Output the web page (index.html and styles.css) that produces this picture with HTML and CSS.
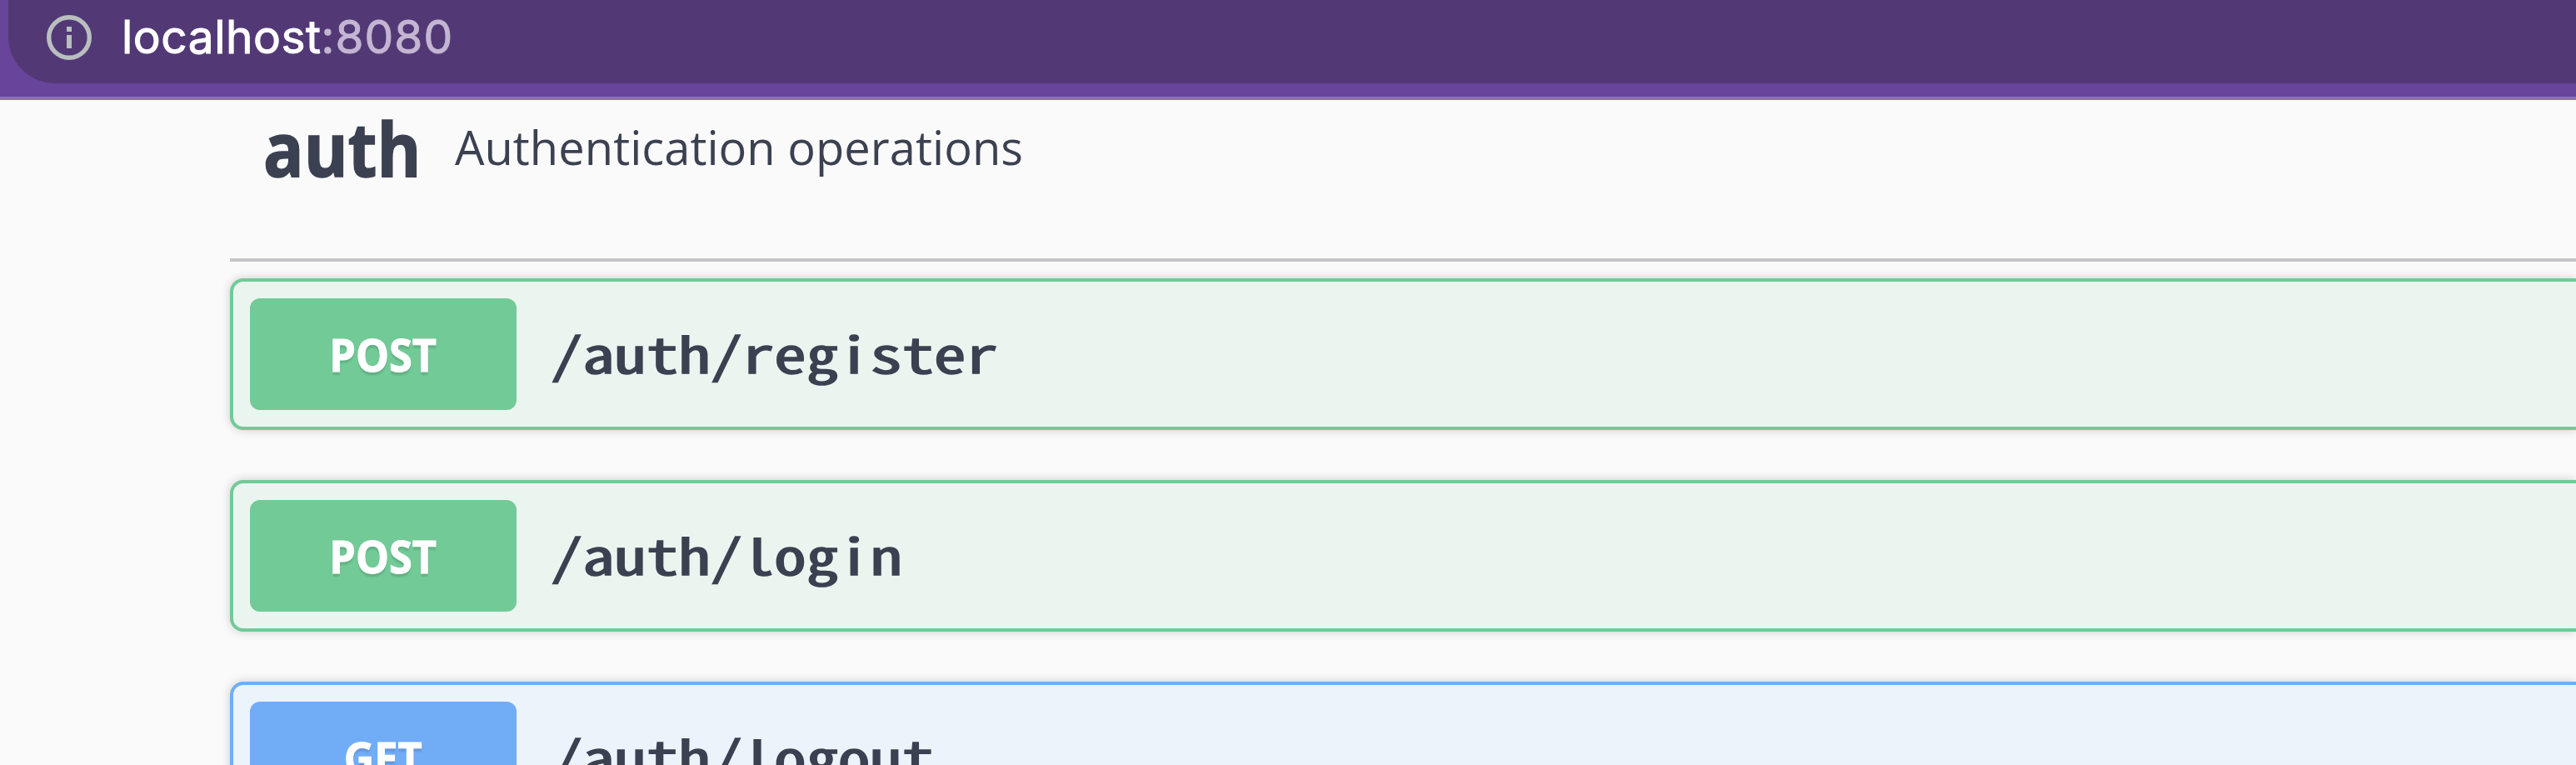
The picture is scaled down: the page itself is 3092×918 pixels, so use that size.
FILE: index.html
```html
<!DOCTYPE html>
<html lang="en">
<head>
<meta charset="utf-8">
<title>localhost:8080</title>
<link rel="stylesheet" href="styles.css">
</head>
<body>
<header class="toolbar">
  <div class="address">
    <svg class="info" viewBox="0 0 54 54" aria-hidden="true">
      <circle cx="27" cy="27" r="24.3" fill="none" stroke="#b9bfbf" stroke-width="5.4"/>
      <path d="M24 14h6v6h-6zM24 24h6v16h-6z" fill="#b9bfbf"/>
    </svg>
    <div class="url"><span class="host">localhost</span><span class="port">:8080</span></div>
  </div>
</header>
<main class="docs">
  <div class="tag">
    <h3 class="tag-name">auth</h3>
    <p class="tag-text">Authentication operations</p>
  </div>
  <div class="operations">
    <div class="op post"><span class="method"><span class="verb">POST</span></span><span class="path">/auth/register</span></div>
    <div class="op post"><span class="method"><span class="verb">POST</span></span><span class="path">/auth/login</span></div>
    <div class="op get"><span class="method"><span class="verb">GET</span></span><span class="path">/auth/logout</span></div>
  </div>
</main>
</body>
</html>
```
FILE: styles.css
```css
* { box-sizing: border-box; }
html, body { height: 918px; margin: 0; overflow: hidden; }
body { background: #fafafa; color: #3b4151; }
.toolbar { height: 120px; padding-left: 10px; background: #68449b; border-bottom: 4px solid #8d6db4; }
.address { display: flex; align-items: flex-start; height: 99.5px; padding: 18px 0 0 46px; background: #523976; border-radius: 0 0 0 56px; }
.info { width: 54px; height: 54px; flex: none; }
.url { margin-left: 36px; margin-top: -9px; font: 400 55px/70px Inter, sans-serif; white-space: nowrap; }
.host { color: #fff; letter-spacing: 0.5px; -webkit-text-stroke: 1px #fff; }
.port { color: #c4b6d3; letter-spacing: 1.1px; -webkit-text-stroke: 1px #c4b6d3; }
.docs { height: 798px; padding-left: 276px; overflow: hidden; }
.tag { display: flex; align-items: flex-start; height: 194px; padding-left: 40px; border-bottom: 4px solid #c4c4c9; }
.tag-name { width: 212px; margin: 0; padding-top: 8px; font: 700 89px/100px "Open Sans", sans-serif; transform: scaleX(.905); transform-origin: left; -webkit-text-stroke: 1.5px #3b4151; }
.tag-text { margin: 0 0 0 18px; padding-top: 18px; font: 400 56px/76px "Open Sans", sans-serif; letter-spacing: .05px; white-space: nowrap; }
.operations { display: flex; flex-direction: column; gap: 60px; padding-top: 20px; }
.op { display: flex; align-items: center; flex: none; height: 182px; padding-left: 20px; border: 4px solid; border-right: 0; border-radius: 16px 0 0 16px; box-shadow: 0 0 12px rgba(0, 0, 0, .19); }
.post { background: #ebf5f0; border-color: #72ca97; }
.get { background: #ebf3fb; border-color: #71acf7; }
.method { display: flex; justify-content: center; align-items: center; width: 320px; height: 134px; border-radius: 12px; color: #fff; }
.post .method { background: #72ca97; }
.get .method { background: #71acf7; }
.verb { font: 700 54.5px/74px "Open Sans", sans-serif; transform: scaleX(.925); -webkit-text-stroke: 1px #fff; text-shadow: 0 4px 2px rgba(0, 0, 0, .12); }
.path { margin: 0 0 4px 41px; font: 400 58px/80px "Noto Sans Mono CJK JP", "DejaVu Sans Mono", monospace; white-space: nowrap; transform: scaleX(1.322); transform-origin: left; -webkit-text-stroke: 1.6px #3b4151; }
```
